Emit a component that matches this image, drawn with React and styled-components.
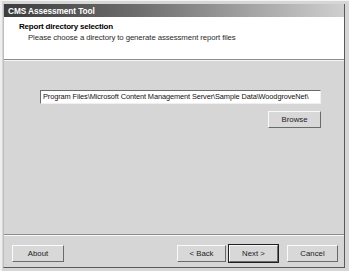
import React from "react";
import styled, { createGlobalStyle } from "styled-components";

const GlobalStyle = createGlobalStyle`
  html, body {
    margin: 0;
    padding: 0;
    background: #e4e4e4;
  }
  body {
    font-family: "Liberation Sans", Arial, sans-serif;
  }
`;

const Window = styled.div`
  width: 350px;
  height: 271px;
  box-sizing: border-box;
  display: flex;
  flex-direction: column;
  background: #d6d6d6;
  border-top: 1px solid #f4f4f4;
  border-left: 2px solid #efefef;
  border-right: 1px solid #ffffff;
  padding: 3px 4px 3px 1px;
  overflow: hidden;
`;

const Frame = styled.div`
  flex: 1;
  display: flex;
  flex-direction: column;
  border-right: 1px solid #5a5a5a;
  border-bottom: 1px solid #5a5a5a;
  border-left: 1px solid #bdbdbd;
`;

const TitleBar = styled.div`
  height: 13px;
  display: flex;
  align-items: center;
  padding-left: 4px;
  background: linear-gradient(to right, #3c3c3c 0%, #6e6e6e 40%, #a8a8a8 75%, #cfcfcf 100%);
  color: #ffffff;
  font-weight: bold;
  font-size: 8.3px;
  letter-spacing: -0.1px;
  white-space: nowrap;
`;

const Header = styled.div`
  height: 43px;
  background: #ffffff;
  border-bottom: 1px solid #8c8c8c;
  box-shadow: 0 1px 0 #f6f6f6;
  padding: 5px 0 0 15px;
  box-sizing: border-box;
  display: flex;
  flex-direction: column;
  gap: 2px;
`;

const HeaderTitle = styled.div`
  font-size: 8px;
  font-weight: bold;
  color: #000000;
  letter-spacing: -0.2px;
`;

const HeaderText = styled.div`
  font-size: 7.8px;
  color: #2a2a2a;
  padding-left: 9px;
  letter-spacing: -0.1px;
`;

const Body = styled.div`
  flex: 1;
  display: flex;
  flex-direction: column;
  padding: 30px 23px 0 36px;
  gap: 7px;
`;

const PathField = styled.div`
  height: 14px;
  box-sizing: border-box;
  background: #ffffff;
  border-top: 1px solid #6a6a6a;
  border-left: 1px solid #6a6a6a;
  border-right: 1px solid #f0f0f0;
  border-bottom: 1px solid #f0f0f0;
  font-size: 7.4px;
  line-height: 11px;
  color: #111111;
  padding: 0 0 0 2px;
  white-space: nowrap;
  overflow: hidden;
  letter-spacing: -0.1px;
`;

const ButtonRow = styled.div`
  display: flex;
  justify-content: flex-end;
`;

const Separator = styled.div`
  height: 1px;
  background: #8c8c8c;
  border-bottom: 1px solid #f8f8f8;
`;

const Footer = styled.div`
  height: 31px;
  box-sizing: border-box;
  display: flex;
  align-items: center;
  padding: 3px 6px 0 8px;
`;

const Button = styled.div`
  width: ${p => p.$w || 52}px;
  flex-shrink: 0;
  height: 17px;
  box-sizing: border-box;
  display: flex;
  align-items: center;
  justify-content: center;
  background: #d8d8d8;
  font-size: 7.8px;
  color: #222222;
  border-top: 1px solid #fafafa;
  border-left: 1px solid #fafafa;
  border-right: 1px solid #6a6a6a;
  border-bottom: 1px solid #6a6a6a;
  box-shadow: ${p => (p.$default ? "0 0 0 1px #202020" : "none")};
  margin-left: ${p => p.$gap || 0}px;
`;

const Spacer = styled.div`
  flex: 1;
`;

export default function App() {
  return (
    <>
      <GlobalStyle />
      <Window>
        <Frame>
          <TitleBar>CMS Assessment Tool</TitleBar>
          <Header>
            <HeaderTitle>Report directory selection</HeaderTitle>
            <HeaderText>
              Please choose a directory to generate assessment report files
            </HeaderText>
          </Header>
          <Body>
            <PathField>
              Program Files\Microsoft Content Management Server\Sample Data\WoodgroveNet\
            </PathField>
            <ButtonRow>
              <Button $w={53}>Browse</Button>
            </ButtonRow>
          </Body>
          <Separator />
          <Footer>
            <Button $w={52}>About</Button>
            <Spacer />
            <Button $w={49}>&lt; Back</Button>
            <Button $w={49} $gap={3} $default>
              Next &gt;
            </Button>
            <Button $w={51} $gap={9}>
              Cancel
            </Button>
          </Footer>
        </Frame>
      </Window>
    </>
  );
}
